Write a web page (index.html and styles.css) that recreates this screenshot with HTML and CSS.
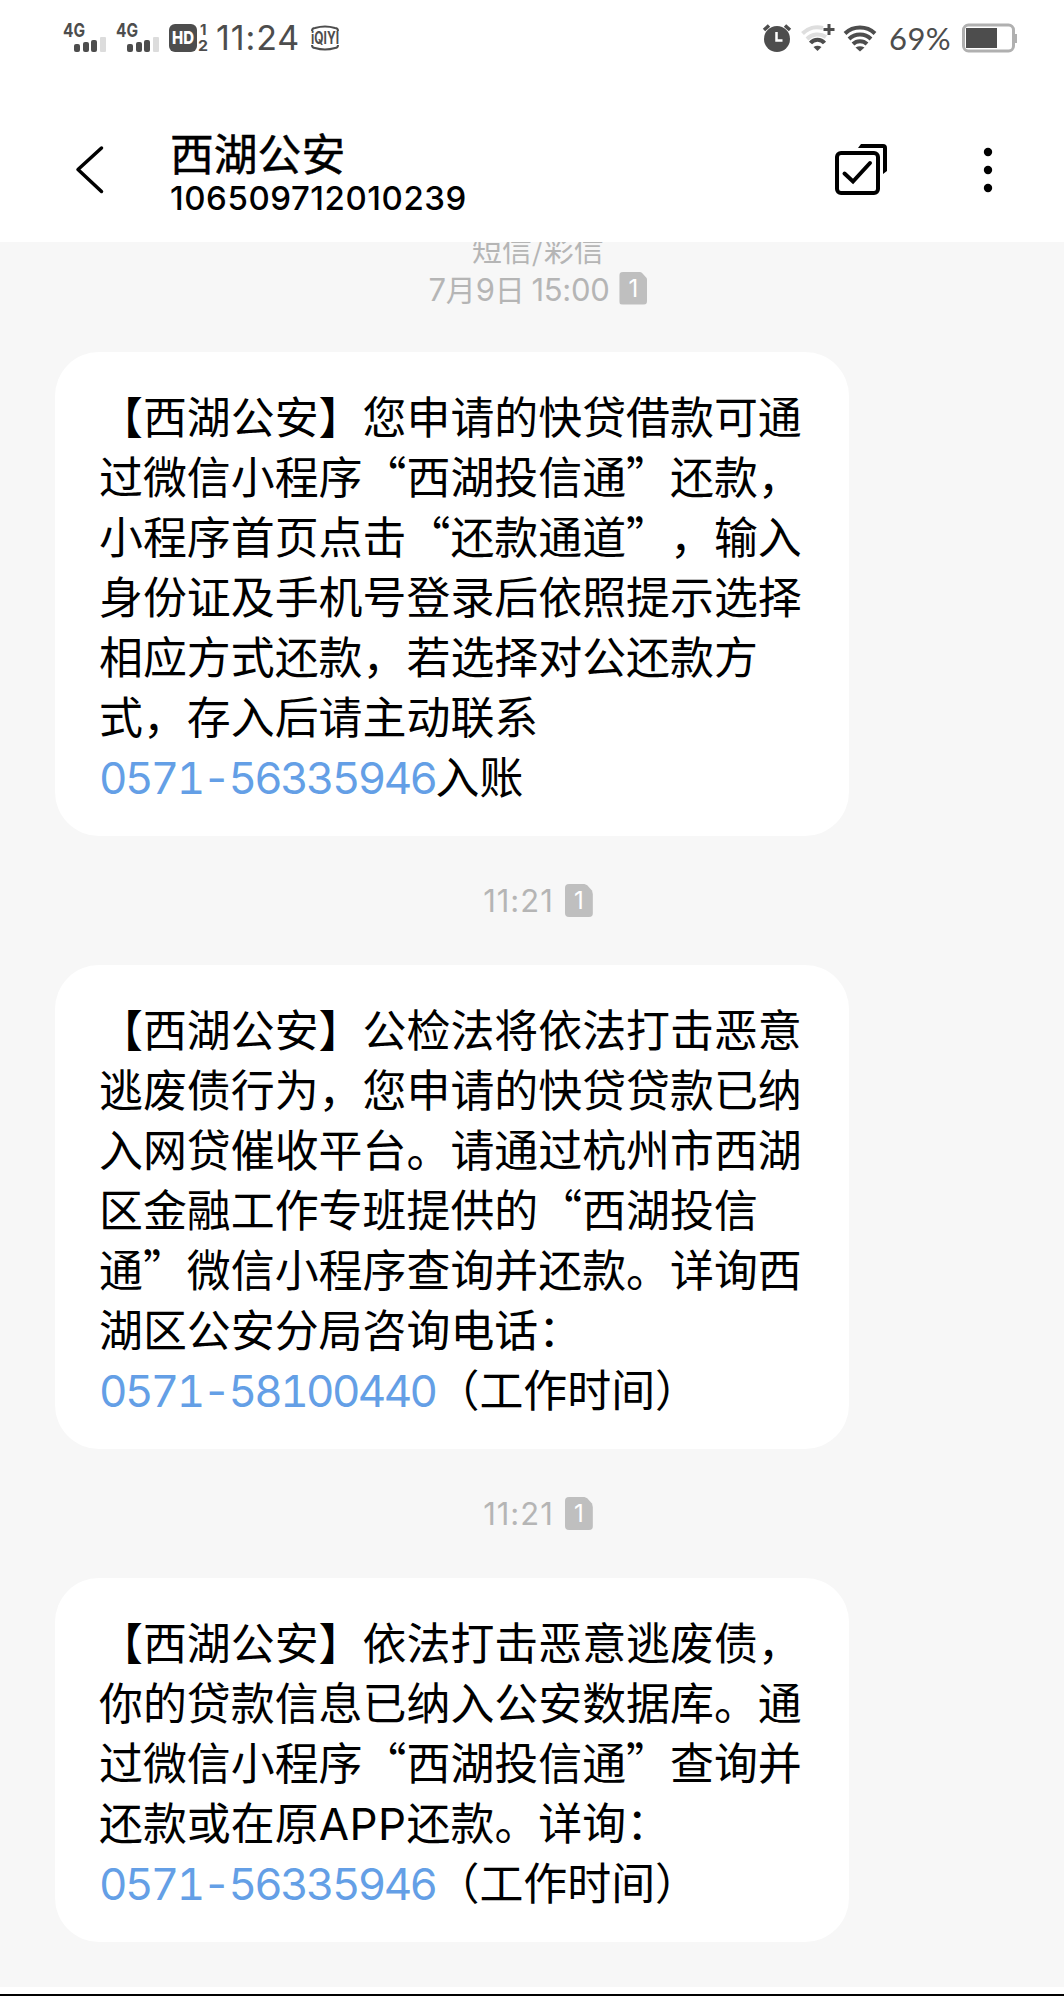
FILE: index.html
```html
<!DOCTYPE html>
<html lang="zh-CN">
<head>
  <meta charset="UTF-8">
  <title>西湖公安</title>
  <link rel="stylesheet" href="styles.css">
</head>
<body>
  <!-- Status bar -->
  <div class="status-bar">
    <div class="status-left">
      <svg class="signal" width="44" height="32" viewBox="0 0 44 32">
        <text class="net" x="0" y="15" textLength="22" lengthAdjust="spacingAndGlyphs">4G</text>
        <rect x="11" y="22" width="6" height="8" rx="2"/>
        <rect x="20" y="20" width="6" height="10" rx="2"/>
        <rect x="28" y="18" width="6" height="12" rx="2"/>
        <rect class="faint" x="37" y="15" width="6" height="15" rx="1"/>
      </svg>
      <svg class="signal" width="44" height="32" viewBox="0 0 44 32">
        <text class="net" x="0" y="15" textLength="22" lengthAdjust="spacingAndGlyphs">4G</text>
        <rect x="11" y="22" width="6" height="8" rx="2"/>
        <rect x="20" y="20" width="6" height="10" rx="2"/>
        <rect x="28" y="18" width="6" height="12" rx="2"/>
        <rect class="faint" x="37" y="15" width="6" height="15" rx="1"/>
      </svg>
      <svg class="hd" width="40" height="32" viewBox="0 0 40 32">
        <rect x="0" y="2" width="28" height="28" rx="6"/>
        <text class="hd-text" x="3" y="22" textLength="22" lengthAdjust="spacingAndGlyphs">HD</text>
        <text class="hd-num" x="31" y="13">1</text>
        <text class="hd-num" x="29" y="29" textLength="10" lengthAdjust="spacingAndGlyphs">2</text>
      </svg>
      <span class="clock">11:24</span>
      <svg class="qiyi" width="30" height="26" viewBox="0 0 30 26">
        <path d="M2 6Q2 3 5 3Q15 0 25 3Q28 3 28 6M2 20Q2 23 5 23Q15 26 25 23Q28 23 28 20"/>
        <text x="1" y="18.500" textLength="28" lengthAdjust="spacingAndGlyphs">iQIYI</text>
      </svg>
    </div>
    <div class="status-right">
      <svg class="alarm" width="30" height="30" viewBox="0 0 30 30">
        <circle cx="15" cy="16" r="13"/>
        <path class="ear" d="M2 7L7 2.500M28 7L23 2.500"/>
        <path class="hand" d="M14.500 9V17.500H20.500"/>
      </svg>
      <svg class="wifi-plus" width="34" height="30" viewBox="0 0 34 30">
        <path class="arc faint-arc" d="M1.500 10.500A21 21 0 0 1 22 5M6 16A15 15 0 0 1 25 14"/>
        <path class="arc" d="M9.500 20A9 9 0 0 1 23.500 20"/>
        <path d="M12.500 24Q16.500 21.500 20.500 24L16.500 28Z"/>
        <path class="plus" d="M28 1V12M22.500 6.500H33.500"/>
      </svg>
      <svg class="wifi" width="34" height="30" viewBox="0 0 34 30">
        <path class="arc" d="M2 10.500A22 22 0 0 1 32 10.500M6 16A16 16 0 0 1 28 16M10 21A10 10 0 0 1 24 21"/>
        <path d="M12.500 24.500Q17 22 21.500 24.500L17 28.500Z"/>
      </svg>
      <span class="percent">69%</span>
      <svg class="battery" width="56" height="30" viewBox="0 0 56 30">
        <rect class="case" x="1.500" y="2" width="50" height="26" rx="5"/>
        <rect x="4" y="5" width="31" height="20"/>
        <rect class="cap" x="53" y="11" width="2" height="9"/>
      </svg>
    </div>
  </div>

  <!-- Conversation header -->
  <div class="header">
    <svg class="back" width="30" height="50" viewBox="0 0 30 50">
      <path d="M26.500 4L3 25.500L26.500 47.500"/>
    </svg>
    <div class="contact">
      <div class="name">西湖公安</div>
      <div class="number">106509712010239</div>
    </div>
    <svg class="select" width="54" height="54" viewBox="0 0 54 54">
      <rect x="3" y="11" width="41" height="40" rx="4"/>
      <path d="M10.500 31.500L19 39.500L36 21"/>
      <path class="behind" d="M24 6L27 2H49Q53 2 53 6V29L49 32V6Z"/>
    </svg>
    <svg class="more" width="10" height="46" viewBox="0 0 10 46">
      <circle cx="5" cy="5" r="4.200"/>
      <circle cx="5" cy="23" r="4.200"/>
      <circle cx="5" cy="41" r="4.200"/>
    </svg>
  </div>

  <!-- Messages -->
  <div class="chat">
    <div class="channel">短信/彩信</div>
    <div class="time first">
      <span><b>7</b>月<b>9</b>日 <b>15:00</b></span>
      <span class="sim">1</span>
    </div>
    <div class="bubble">【西湖公安】您申请的快贷借款可通<br>过微信小程序“西湖投信通”还款，<br>小程序首页点击“还款通道”，输入<br>身份证及手机号登录后依照提示选择<br>相应方式还款，若选择对公还款方<br>式，存入后请主动联系<br><a>0571-56335946</a>入账</div>

    <div class="time"><b>11:21</b><span class="sim">1</span></div>
    <div class="bubble">【西湖公安】公检法将依法打击恶意<br>逃废债行为，您申请的快贷贷款已纳<br>入网贷催收平台。请通过杭州市西湖<br>区金融工作专班提供的“西湖投信<br>通”微信小程序查询并还款。详询西<br>湖区公安分局咨询电话：<br><a>0571-58100440</a>（工作时间）</div>

    <div class="time"><b>11:21</b><span class="sim">1</span></div>
    <div class="bubble">【西湖公安】依法打击恶意逃废债，<br>你的贷款信息已纳入公安数据库。通<br>过微信小程序“西湖投信通”查询并<br>还款或在原<span class="latin">APP</span>还款。详询：<br><a>0571-56335946</a>（工作时间）</div>
  </div>
</body>
</html>
```
FILE: styles.css
```css
html, body {
  margin: 0;
  padding: 0;
}

body {
  width: 1064px;
  height: 1996px;
  box-sizing: border-box;
  display: flex;
  flex-direction: column;
  overflow: hidden;
  background: #fff;
  border-bottom: 2px solid #000;
  color: #000;
  font-family: "Noto Sans CJK SC", sans-serif;
  text-spacing-trim: space-all;
}

svg {
  display: block;
  flex: none;
  overflow: visible;
}

/* Status bar */
.status-bar {
  display: flex;
  justify-content: space-between;
  height: 78px;
  box-sizing: border-box;
  padding: 22px 46px 0 63px;
  color: #4d4d4d;
  fill: #4d4d4d;
  font-family: Inter, sans-serif;
}

.status-left,
.status-right {
  display: flex;
  height: 32px;
  align-items: center;
}

.signal {
  margin-right: 9px;
}

.net {
  font-size: 19px;
  font-weight: 700;
}

.faint {
  fill: #dcdcdc;
}

.hd {
  margin-right: 7px;
}

.hd-text {
  fill: #fff;
  font-size: 18px;
  font-weight: 800;
}

.hd-num {
  font-size: 15px;
  font-weight: 700;
}

.clock {
  width: 85px;
  font-size: 34px;
  line-height: 42px;
  letter-spacing: 0.9px;
  white-space: nowrap;
}

.qiyi {
  margin-left: 9px;
}

.qiyi path {
  fill: none;
  stroke: #4d4d4d;
  stroke-width: 2;
}

.qiyi text {
  font-size: 17px;
  font-weight: 700;
}

.alarm {
  margin-right: 9px;
}

.ear {
  stroke: #4d4d4d;
  stroke-width: 3.5;
}

.hand {
  fill: none;
  stroke: #fff;
  stroke-width: 2.5;
}

.arc {
  fill: none;
  stroke: #4d4d4d;
  stroke-width: 4;
}

.faint-arc {
  stroke: #dedede;
}

.plus {
  stroke: #4d4d4d;
  stroke-width: 3;
}

.wifi-plus {
  margin-right: 8px;
}

.wifi {
  margin-right: 12px;
}

.percent {
  width: 73px;
  font-family: Lato, sans-serif;
  font-size: 31px;
  line-height: 40px;
  letter-spacing: 0.4px;
}

.battery .case {
  fill: #fff;
  stroke: #b0b0b0;
  stroke-width: 3;
}

.battery .cap {
  fill: #b0b0b0;
}

/* Header */
.header {
  display: flex;
  align-items: flex-start;
  height: 164px;
  box-sizing: border-box;
  padding: 45px 71px 0 75px;
}

.back {
  margin-top: 21px;
}

.back path {
  fill: none;
  stroke: #000;
  stroke-width: 3.5;
  stroke-linecap: round;
  stroke-linejoin: round;
}

.contact {
  flex: 1;
  margin-left: 65px;
}

.name {
  font-size: 43.8px;
  line-height: 58px;
  -webkit-text-stroke: 0.5px #000;
}

.number {
  font-family: Inter, sans-serif;
  font-size: 33px;
  font-weight: 500;
  line-height: 34px;
  letter-spacing: 0.55px;
}

.select {
  margin-top: 19px;
  margin-right: 1px;
}

.select rect,
.select path {
  fill: none;
  stroke: #000;
  stroke-width: 4;
  stroke-linecap: round;
}

.select .behind {
  fill: #000;
  stroke: none;
}

.more {
  margin: 24px 0 0 94px;
}

/* Messages */
.chat {
  height: 1745px;
  overflow: hidden;
  background: #f7f7f7;
}

.channel,
.time {
  color: #b5b5b5;
  font-size: 30px;
}

.channel {
  width: 1076px;
  height: 26px;
  line-height: 12px;
  text-align: center;
}

.time {
  display: flex;
  justify-content: center;
  align-items: center;
  gap: 11px;
  width: 1076px;
  height: 129px;
}

.time.first {
  gap: 10px;
  height: 40px;
  margin-bottom: 44px;
}

.time b {
  font-family: Inter, sans-serif;
  font-size: 31px;
  font-weight: 400;
  letter-spacing: -0.3px;
}

.time > b {
  letter-spacing: 1px;
}

.sim {
  width: 28px;
  height: 33px;
  border-radius: 4px;
  background: #bfbfbf;
  clip-path: polygon(0 0, 70% 0, 80% 4%, 97% 20%, 100% 30%, 100% 100%, 0 100%);
  color: #fff;
  font-family: Inter, sans-serif;
  font-size: 24px;
  line-height: 33px;
  text-align: center;
}

.bubble {
  width: 794px;
  box-sizing: border-box;
  margin-left: 55px;
  padding: 33px 44px 31px;
  border-radius: 44px;
  background: #fff;
  font-size: 43.93px;
  line-height: 60px;
  white-space: nowrap;
}

.bubble a {
  color: #649fe6;
  font-variant-numeric: tabular-nums;
  letter-spacing: -2.6px;
}

.bubble a,
.latin {
  font-family: Inter, sans-serif;
  line-height: 1;
}

.latin {
  letter-spacing: 0.5px;
}
```
